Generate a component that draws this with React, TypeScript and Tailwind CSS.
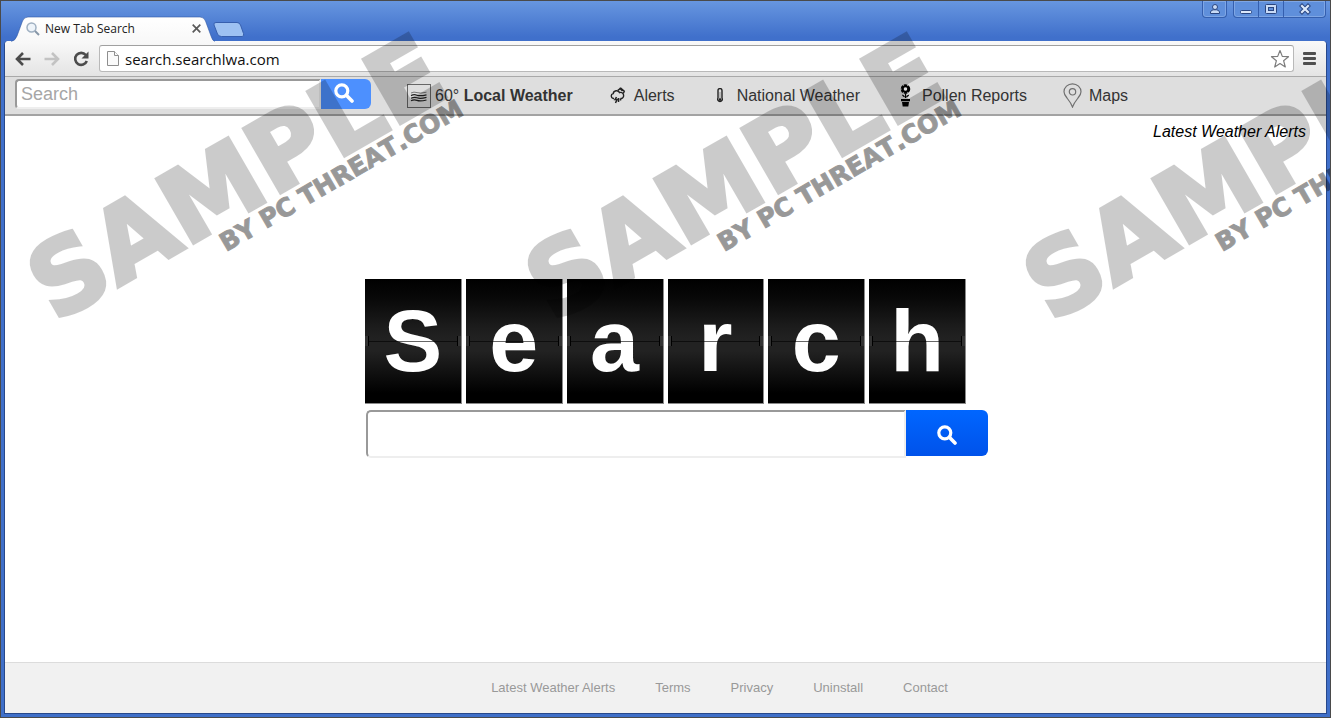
import React from 'react';

const LETTERS = ['S', 'e', 'a', 'r', 'c', 'h'];
const FOOTER_LINKS = ['Latest Weather Alerts', 'Terms', 'Privacy', 'Uninstall', 'Contact'];

function Magnifier({ className }: { className: string }) {
  return (
    <svg viewBox="0 0 20 20" className={className} fill="none" stroke="#fff" aria-hidden="true">
      <circle cx="7.8" cy="7.8" r="6" strokeWidth="3.2" />
      <path d="M12.6 12.6 L18 18" strokeWidth="3.6" strokeLinecap="round" />
    </svg>
  );
}

function WindowControls() {
  return (
    <div className="mr-px flex items-start">
      <button
        aria-label="User"
        className="mr-[6px] flex h-[17px] w-[25px] items-center justify-center rounded-b border border-t-0 border-[#355fae] bg-[#5f8fdb] shadow-[inset_0_0_0_1px_#7fa6e4]"
      >
        <svg width="12" height="12" viewBox="0 0 12 12" fill="#c9dbf6" stroke="#2b4680" aria-hidden="true">
          <path d="M1.5 10.5 V9 Q2 7 4.5 6.8 H7.5 Q10 7 10.5 9 V10.5 Z" />
          <circle cx="6" cy="4" r="2.5" />
        </svg>
      </button>
      <div className="flex h-[17px] w-[93px] overflow-hidden rounded-b border border-t-0 border-[#355fae] bg-[#5f8fdb] shadow-[inset_0_0_0_1px_#7fa6e4]">
        <button aria-label="Minimize" className="flex w-[25px] items-center justify-center border-r border-[#355fae]">
          <svg width="12" height="12" viewBox="0 0 12 12" aria-hidden="true">
            <rect x="0.5" y="7.5" width="11" height="3" rx="1" fill="#dce8fa" stroke="#2b4680" />
          </svg>
        </button>
        <button aria-label="Maximize" className="flex w-[25px] items-center justify-center border-r border-[#355fae]">
          <svg width="12" height="12" viewBox="0 0 12 12" aria-hidden="true">
            <rect x="0.5" y="1.5" width="11" height="9" rx="1" fill="#c9dbf6" stroke="#2b4680" />
            <rect x="3.5" y="4.5" width="5" height="3" fill="#5f8fdb" stroke="#2b4680" />
          </svg>
        </button>
        <button aria-label="Close window" className="flex grow items-center justify-center">
          <svg width="12" height="12" viewBox="0 0 12 12" aria-hidden="true">
            <path d="M3 3 L9 9 M9 3 L3 9" stroke="#2b4680" strokeWidth="4.2" strokeLinecap="square" />
            <path d="M3 3 L9 9 M9 3 L3 9" stroke="#dce8fa" strokeWidth="2.2" strokeLinecap="square" />
          </svg>
        </button>
      </div>
    </div>
  );
}

function TitleBar() {
  return (
    <header className="flex h-[40px] items-start justify-between">
      <div className="flex h-full items-end pl-[7px]">
        <div className="relative h-[25px] w-[204px]">
          <svg
            className="absolute left-0 top-0"
            width="204"
            height="26"
            viewBox="0 0 204 26"
            aria-hidden="true"
          >
            <defs>
              <linearGradient id="tab" x1="0" y1="0" x2="0" y2="1">
                <stop offset="0" stopColor="#ffffff" />
                <stop offset="1" stopColor="#f8f8f8" />
              </linearGradient>
            </defs>
            <path
              d="M0 26 V25.5 Q4 25 6 20 L11.5 5 Q13 1 17 1 H189 Q193 1 194.5 5 L200 20 Q201.5 25 204 25.5 V26 Z"
              fill="url(#tab)"
            />
            <path
              d="M0 25.5 Q4 25 6 20 L11.5 5 Q13 1 17 1 H189 Q193 1 194.5 5 L200 20 Q201.5 25 204 25.5"
              fill="none"
              stroke="#2f56a3"
              strokeOpacity="0.6"
            />
          </svg>
          <div className="relative flex h-full items-center pl-[15px] pr-[14px]">
            <svg width="14" height="14" viewBox="0 0 14 14" fill="none" aria-hidden="true">
              <circle cx="5.5" cy="5.5" r="4.5" stroke="#9fb0c2" strokeWidth="1.5" fill="#eef4fa" />
              <path d="M9 9 L13 13" stroke="#8797a8" strokeWidth="2" />
            </svg>
            <span className="ml-[5px] grow font-['Open_Sans','Noto_Sans',sans-serif] text-[12px] leading-[16px] text-[#222]">
              New Tab Search
            </span>
            <button aria-label="Close tab">
              <svg width="9" height="9" viewBox="0 0 9 9" stroke="#5a5a5a" strokeWidth="1.7" aria-hidden="true">
                <path d="M0.7 0.7 L8.3 8.3 M8.3 0.7 L0.7 8.3" />
              </svg>
            </button>
          </div>
        </div>
        <button aria-label="New tab" className="mb-[3px] -ml-[3px]">
          <svg width="34" height="17" viewBox="0 0 34 17" aria-hidden="true">
            <path
              d="M4 1.5 H25 Q27.5 1.5 28.5 4 L31.5 12.5 Q32.5 15.5 30 15.5 H9.5 Q6.5 15.5 5.5 13 L2 4 Q1.2 1.5 4 1.5 Z"
              fill="#9dc1f2"
              stroke="#365fae"
            />
          </svg>
        </button>
      </div>
      <WindowControls />
    </header>
  );
}

function AddressBar() {
  return (
    <div className="flex h-[36px] items-center rounded-t border-b border-[#a9a9a9] bg-linear-to-b from-[#f9f9f9] to-[#e4e4e4] px-[10px]">
      <button aria-label="Back">
        <svg width="16" height="14" viewBox="0 0 16 14" fill="none" stroke="#4c4c4c" strokeWidth="2.6" aria-hidden="true">
          <path d="M1.5 7 H15.5 M8 1 L2 7 L8 13" />
        </svg>
      </button>
      <button aria-label="Forward" className="ml-[13px]">
        <svg width="16" height="14" viewBox="0 0 16 14" fill="none" stroke="#c3c3c3" strokeWidth="2.6" aria-hidden="true">
          <path d="M0.5 7 H14.5 M8 1 L14 7 L8 13" />
        </svg>
      </button>
      <button aria-label="Reload" className="ml-[13px]">
        <svg width="16" height="16" viewBox="0 0 16 16" aria-hidden="true">
          <path d="M12.8 4 A6 6 0 1 0 13.8 10" fill="none" stroke="#4c4c4c" strokeWidth="2.6" />
          <path d="M15.5 0.5 V7.5 H8.5 Z" fill="#4c4c4c" />
        </svg>
      </button>
      <div className="ml-[10px] flex h-[27px] grow items-center rounded-[3px] border border-[#b9b9b9] border-t-[#a0a0a0] bg-white pl-[7px] pr-[3px]">
        <svg width="12" height="15" viewBox="0 0 12 15" fill="#fafafa" stroke="#8e8e8e" aria-hidden="true">
          <path d="M0.5 0.5 H7.5 L11.5 4.5 V14.5 H0.5 Z" />
          <path d="M7.5 0.5 V4.5 H11.5" />
        </svg>
        <input
          aria-label="Address"
          defaultValue="search.searchlwa.com"
          className="ml-[6px] min-w-0 grow bg-transparent font-['Open_Sans','Noto_Sans',sans-serif] text-[15px] leading-[20px] text-[#111] outline-none"
        />
        <button aria-label="Bookmark this page">
          <svg width="20" height="20" viewBox="0 0 20 20" fill="#fff" stroke="#7d7d7d" strokeWidth="1.2" strokeLinejoin="round" aria-hidden="true">
            <path d="M10 1.5 L12.3 7.4 L18.5 7.7 L13.6 11.7 L15.3 18 L10 14.5 L4.7 18 L6.4 11.7 L1.5 7.7 L7.7 7.4 Z" />
          </svg>
        </button>
      </div>
      <button aria-label="Menu" className="ml-[9px]">
        <svg width="13" height="13" viewBox="0 0 13 13" fill="#4f4f4f" aria-hidden="true">
          <rect width="13" height="3" rx="1" />
          <rect y="5" width="13" height="3" rx="1" />
          <rect y="10" width="13" height="3" rx="1" />
        </svg>
      </button>
    </div>
  );
}

function WeatherBar() {
  return (
    <nav className="flex h-[39px] items-center border-b-2 border-[#a3a3a3] bg-[#dedede] pl-[10px] text-[16px] leading-[20px] text-[#333]">
      <form className="mb-[3px] flex h-[30px]" onSubmit={(e) => e.preventDefault()}>
        <input
          type="search"
          aria-label="Search"
          placeholder="Search"
          className="w-[306px] rounded-l-[4px] border-2 border-b-[#eee] border-l-[#999] border-r-[#eee] border-t-[#999] bg-white px-[4px] text-[18px] placeholder:text-[#a6a6a6]"
        />
        <button aria-label="Search" className="flex w-[50px] items-center justify-center rounded-r-[6px] bg-[#4d90fe] pb-[2px] pr-[4px]">
          <Magnifier className="size-[20px]" />
        </button>
      </form>
      <a href="#local" className="ml-[36px] flex items-center gap-[4px]">
        <svg width="24" height="24" viewBox="0 0 24 24" fill="none" aria-hidden="true">
          <rect x="0.5" y="0.5" width="23" height="23" stroke="#666" />
          <path d="M4 9 q3 -1.600 6 -0.400 t9.500 -0.400" stroke="#777" />
          <path
            d="M4 11.600 q3 -1.600 6 -0.400 t9.500 -0.400 M4 14.200 q3 -1.600 6 -0.400 t9.500 -0.400 M4 16.800 q3 -1.600 6 -0.400 t9.500 -0.400"
            stroke="#222"
            strokeWidth="1.2"
          />
        </svg>
        <span>
          60° <b>Local Weather</b>
        </span>
      </a>
      <a href="#alerts" className="ml-[37px] flex items-center gap-[8px]">
        <svg width="16" height="17" viewBox="0 0 16 17" fill="none" stroke="#222" strokeWidth="1.4" aria-hidden="true">
          <path d="M4 11.5 H3.3 A2.500 2.500 0 0 1 3.2 6.600 A3.400 3.400 0 0 1 9.600 5.600 A3 3 0 1 1 11.500 11.500 H10.500" />
          <path d="M7.800 3.400 L10.800 1.200 L14.300 4.200 L13.300 6.600 M9.500 1 L12.500 4" />
          <path d="M6.500 10 L5 12.600 H7 L5.500 16 M8.500 11 V15 M10.500 11.500 V13.500" strokeWidth="1.5" />
        </svg>
        <span>Alerts</span>
      </a>
      <a href="#national" className="ml-[40px] flex items-center gap-[12px]">
        <svg width="10" height="15" viewBox="0 0 10 15" fill="none" aria-hidden="true">
          <path d="M3 10 V2.500 A2 2 0 0 1 7 2.500 V10 A2.300 2.300 0 1 1 3 10 Z" stroke="#222" strokeWidth="1.4" />
          <path d="M5 4 V11" stroke="#999" />
          <circle cx="5" cy="11.600" r="1.300" fill="#222" />
        </svg>
        <span>National Weather</span>
      </a>
      <a href="#pollen" className="ml-[39px] flex items-center gap-[10px]">
        <svg width="13" height="23" viewBox="0 0 13 23" fill="#000" aria-hidden="true">
          <circle cx="6.5" cy="5" r="3.300" fill="none" stroke="#000" strokeWidth="3" strokeDasharray="2.900 0.550" />
          <circle cx="6.5" cy="5" r="2.800" fill="none" stroke="#000" strokeWidth="1.600" />
          <path d="M6 9.500 H7.200 V14 H6 Z M3 10.500 Q5 10.500 6.200 13.200 Q3.500 13.200 3 10.500 M10.200 10.500 Q8 10.500 7 13.200 Q9.700 13.200 10.200 10.500" />
          <path d="M2 15 H11 V17.300 H2 Z M3 18 H10 L9.300 22.500 H3.700 Z" />
        </svg>
        <span>Pollen Reports</span>
      </a>
      <a href="#maps" className="ml-[36px] flex items-center gap-[7px]">
        <svg width="19" height="25" viewBox="0 0 19 25" fill="none" stroke="#707070" strokeWidth="1.2" aria-hidden="true">
          <path d="M9.500 24 Q8 20 4 15 Q1 11.500 1 8.800 A8.500 8 0 0 1 18 8.800 Q18 11.500 15 15 Q11 20 9.500 24 Z" />
          <circle cx="9.500" cy="8.800" r="3.200" />
        </svg>
        <span>Maps</span>
      </a>
    </nav>
  );
}

function FlapLogo() {
  return (
    <h1 aria-label="Search" className="grid grid-cols-6 gap-[4px] text-center text-[88px] font-bold leading-[124px] text-white">
      {LETTERS.map((letter) => (
        <span
          key={letter}
          className="relative h-[125px] overflow-hidden border-b border-r border-[#8a8a8a] bg-[linear-gradient(to_bottom,#000_0%,#080808_15%,#1d1d1d_40%,#222_50%,#222_58%,#0c0c0c_80%,#000_92%)]"
        >
          {letter}
          <span className="absolute inset-x-0 top-[62px] h-px bg-black/60" />
          <span className="absolute left-0 top-[57px] h-[10px] w-[4px] border-r border-black bg-[#333]" />
          <span className="absolute right-0 top-[57px] h-[10px] w-[4px] border-l border-black bg-[#333]" />
        </span>
      ))}
    </h1>
  );
}

function Watermark() {
  return (
    <svg className="pointer-events-none absolute inset-0 h-full w-full" aria-hidden="true">
      {[0, 498, 996].map((x) => (
        <g
          key={x}
          transform={`translate(${x} 0)`}
          fill="#000"
          stroke="#000"
          className="font-['DejaVu_Sans',sans-serif] font-bold [font-kerning:none]"
        >
          <g opacity="0.2">
            <text transform="translate(54 322) rotate(-30)" fontSize="101" strokeWidth="4">
              SAMPLE
            </text>
          </g>
          <g opacity="0.4">
            <text transform="translate(225 251) rotate(-30)" fontSize="25" strokeWidth="1">
              BY PC THREAT.COM
            </text>
          </g>
        </g>
      ))}
    </svg>
  );
}

export default function App() {
  return (
    <div className="relative flex min-h-screen flex-col overflow-hidden border border-[#4a4a4a] bg-[#3f6fc8] bg-[linear-gradient(to_bottom,#6796e0_0px,#4070cb_36px,#3f6fc8_100%)] px-[3px] pb-[3px] font-['Liberation_Sans',Arial,sans-serif]">
      <TitleBar />
      <div className="flex grow flex-col rounded-t border border-t-0 border-[#27488b] bg-white">
        <AddressBar />
        <WeatherBar />
        <main className="flex grow flex-col">
          <a href="#latest" className="mr-[20px] mt-[6px] self-end text-[16px] italic leading-[20px] text-black">
            Latest Weather Alerts
          </a>
          <div className="mx-auto mt-[137px] w-[601px]">
            <FlapLogo />
            <form className="ml-px mt-[6px] flex h-[48px] w-[622px] items-start" onSubmit={(e) => e.preventDefault()}>
              <input
                type="search"
                aria-label="Web search"
                className="h-full min-w-0 grow rounded-l-[5px] border-2 border-b-[#eee] border-l-[#999] border-r-[#eee] border-t-[#999] bg-white px-[8px] text-[20px]"
              />
              <button
                aria-label="Search the web"
                className="flex h-[46px] w-[82px] items-center justify-center rounded-r-[6px] bg-linear-to-b from-[#0066ff] to-[#0052ea] pt-[4px]"
              >
                <Magnifier className="size-[20px]" />
              </button>
            </form>
          </div>
        </main>
        <footer className="flex h-[51px] items-center justify-center gap-[40px] border-t border-[#dcdcdc] bg-[#f1f1f1] pl-[108px] text-[13px] leading-[16px] text-[#999]">
          {FOOTER_LINKS.map((label) => (
            <a key={label} href="#footer">
              {label}
            </a>
          ))}
        </footer>
      </div>
      <Watermark />
    </div>
  );
}
